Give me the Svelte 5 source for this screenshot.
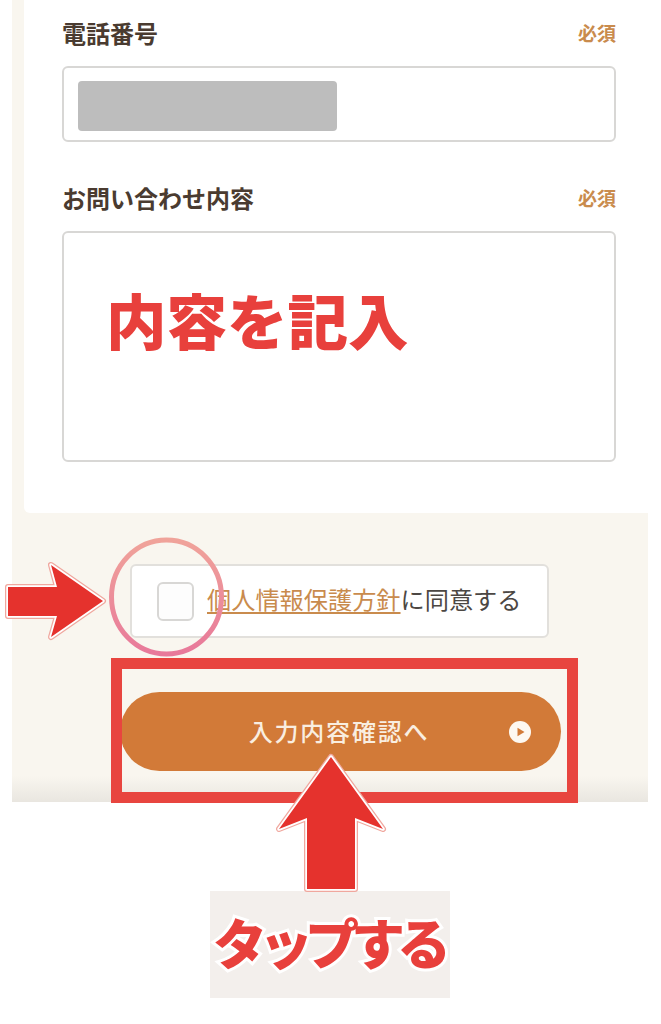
<script>
	const fields = [
		{ label: '電話番号', kind: 'tel' },
		{ label: 'お問い合わせ内容', kind: 'body' }
	];

	const leftArrow = '8,587 57,587 51,565 103,601 51,637 57,616 8,616';
	const upArrow = '331,757 383,829 355,818 355,889 307,889 307,818 279,829';
</script>

<div class="page">
	<section class="panel">
		<div class="card">
			{#each fields as field}
				<div class="field">
					<div class="label-row">
						<span class="label">{field.label}</span>
						<span class="required">必須</span>
					</div>
					{#if field.kind === 'tel'}
						<div class="input"><div class="redacted"></div></div>
					{:else}
						<div class="textarea"><span class="note">内容を記入</span></div>
					{/if}
				</div>
			{/each}
		</div>

		<div class="agree">
			<span class="checkbox"></span>
			<span class="agree-text"><span class="link">個人情報保護方針</span>に同意する</span>
		</div>

		<div class="submit">
			<span>入力内容確認へ</span>
			<svg class="play" viewBox="0 0 22 22" width="22" height="22">
				<circle cx="11" cy="11" r="11" fill="#fdf8f1" />
				<path d="M8.5 6.8 L15.5 11 L8.5 15.2 Z" fill="#d27a38" />
			</svg>
		</div>
	</section>

	<div class="tap"><span>タップする</span></div>

	<!-- annotations over the screenshot -->
	<div class="red-box"></div>

	<svg class="overlay" viewBox="0 0 661 1024" width="661" height="1024">
		<defs>
			<linearGradient id="ring" x1="0" y1="0" x2="0" y2="1">
				<stop offset="0" stop-color="#f0a39a" />
				<stop offset="1" stop-color="#e8799a" />
			</linearGradient>
		</defs>
		<ellipse cx="166.5" cy="597" rx="55" ry="57" fill="none" stroke="url(#ring)" stroke-width="5" />

		{#each [leftArrow, upArrow] as points}
			<polygon class="arrow-edge" {points} />
			<polygon class="arrow-line" {points} />
			<polygon class="arrow-fill" {points} />
		{/each}
	</svg>
</div>

<style>
	:global(body) {
		margin: 0;
		background: #fff;
	}

	.page {
		position: relative;
		width: 661px;
		height: 1024px;
		overflow: hidden;
		font-family: 'Noto Sans CJK JP', 'Noto Sans', sans-serif;
	}

	.panel {
		box-sizing: border-box;
		width: 636px;
		height: 802px;
		margin-left: 12px;
		padding-left: 12px;
		background: linear-gradient(#f9f6ef 0, #f9f6ef 776px, #e9e6e0 802px);
	}

	.card {
		box-sizing: border-box;
		height: 513px;
		padding: 14px 32px 0 38px;
		background: #fff;
		border-bottom-left-radius: 6px;
		display: flex;
		flex-direction: column;
		gap: 37px;
	}

	.label-row {
		display: flex;
		justify-content: space-between;
		align-items: center;
		height: 36px;
		margin-bottom: 16px;
	}

	.label {
		font-size: 24px;
		font-weight: 700;
		color: #4a3b30;
	}

	.required {
		font-size: 19px;
		font-weight: 700;
		color: #c98b4d;
	}

	.input,
	.textarea {
		box-sizing: border-box;
		border: 2px solid #d8d7d5;
		border-radius: 6px;
		background: #fff;
	}

	.input {
		height: 76px;
		padding: 13px 14px;
	}

	.redacted {
		width: 259px;
		height: 50px;
		border-radius: 4px;
		background: #bdbdbd;
	}

	.textarea {
		height: 231px;
		padding: 48px 0 0 42px;
	}

	.note {
		display: block;
		font-size: 60.5px;
		line-height: 76px;
		font-weight: 900;
		color: #e8403c;
	}

	.agree {
		box-sizing: border-box;
		display: flex;
		align-items: center;
		gap: 13px;
		width: 419px;
		height: 74px;
		margin: 51px 0 0 106px;
		padding-left: 25px;
		background: #fff;
		border: 2px solid #e2e0dc;
		border-radius: 6px;
	}

	.checkbox {
		box-sizing: border-box;
		width: 37px;
		height: 39px;
		background: #fdfdfd;
		border: 2px solid #d8d7d5;
		border-radius: 6px;
	}

	.agree-text {
		padding-bottom: 5px;
		font-size: 24.2px;
		color: #4c4743;
		white-space: nowrap;
	}

	.link {
		color: #c98b4d;
		text-decoration: underline;
		text-underline-offset: 3px;
		text-decoration-thickness: 1.5px;
	}

	.submit {
		position: relative;
		display: flex;
		align-items: center;
		justify-content: center;
		width: 441px;
		height: 79px;
		margin: 54px 0 0 96px;
		border-radius: 40px;
		background: #d27a38;
		color: #f9eee0;
		font-size: 24px;
		font-weight: 500;
		letter-spacing: 1.8px;
	}

	.submit span {
		margin: -2px 3px 0 0;
	}

	.play {
		position: absolute;
		right: 30px;
		top: 29px;
	}

	.tap {
		box-sizing: border-box;
		display: flex;
		align-items: center;
		justify-content: center;
		width: 240px;
		height: 107px;
		margin: 89px 0 0 210px;
		background: #f3efec;
	}

	.tap span {
		margin: -6px 4px 0 0;
		font-size: 54px;
		font-weight: 900;
		letter-spacing: -8px;
		color: #e8403c;
		white-space: nowrap;
		paint-order: stroke fill;
		-webkit-text-stroke: 6px #fff;
	}

	.red-box {
		position: absolute;
		left: 111px;
		top: 658px;
		box-sizing: border-box;
		width: 467px;
		height: 145px;
		border: 11px solid #e8453f;
	}

	.overlay {
		position: absolute;
		left: 0;
		top: 0;
		pointer-events: none;
	}

	.arrow-edge {
		fill: none;
		stroke: #f0a79e;
		stroke-width: 6;
		stroke-linejoin: round;
	}

	.arrow-line {
		fill: none;
		stroke: #fff;
		stroke-width: 3.5;
		stroke-linejoin: round;
	}

	.arrow-fill {
		fill: #e5322d;
	}
</style>
